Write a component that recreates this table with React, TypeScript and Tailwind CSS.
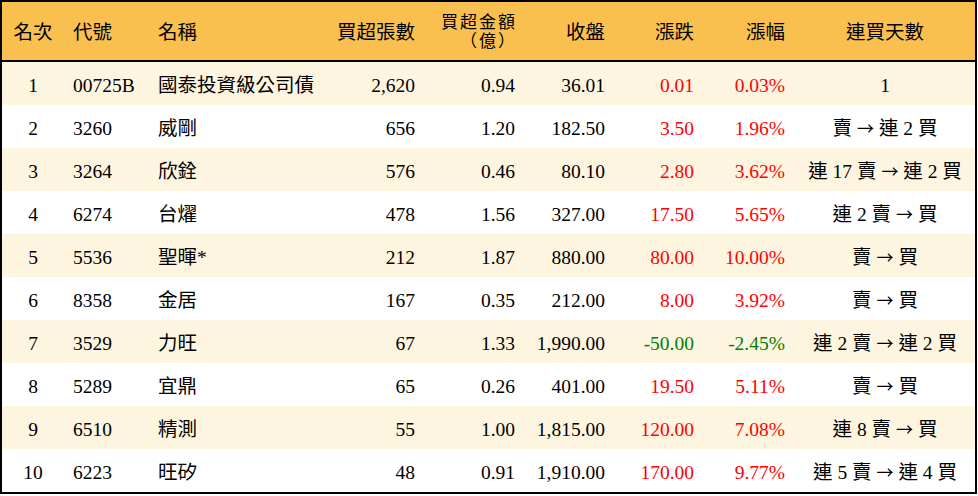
const COLS = "grid grid-cols-[62px_86px_180px_95px_100px_90px_89px_91px_180px]";

type Row = {
  rank: number;
  code: string;
  name: string;
  lots: string;
  amount: string;
  close: string;
  change: string;
  pct: string;
  streak: string;
};

const ROWS: Row[] = [
  { rank: 1, code: "00725B", name: "國泰投資級公司債", lots: "2,620", amount: "0.94", close: "36.01", change: "0.01", pct: "0.03%", streak: "1" },
  { rank: 2, code: "3260", name: "威剛", lots: "656", amount: "1.20", close: "182.50", change: "3.50", pct: "1.96%", streak: "賣 → 連 2 買" },
  { rank: 3, code: "3264", name: "欣銓", lots: "576", amount: "0.46", close: "80.10", change: "2.80", pct: "3.62%", streak: "連 17 賣 → 連 2 買" },
  { rank: 4, code: "6274", name: "台燿", lots: "478", amount: "1.56", close: "327.00", change: "17.50", pct: "5.65%", streak: "連 2 賣 → 買" },
  { rank: 5, code: "5536", name: "聖暉*", lots: "212", amount: "1.87", close: "880.00", change: "80.00", pct: "10.00%", streak: "賣 → 買" },
  { rank: 6, code: "8358", name: "金居", lots: "167", amount: "0.35", close: "212.00", change: "8.00", pct: "3.92%", streak: "賣 → 買" },
  { rank: 7, code: "3529", name: "力旺", lots: "67", amount: "1.33", close: "1,990.00", change: "-50.00", pct: "-2.45%", streak: "連 2 賣 → 連 2 買" },
  { rank: 8, code: "5289", name: "宜鼎", lots: "65", amount: "0.26", close: "401.00", change: "19.50", pct: "5.11%", streak: "賣 → 買" },
  { rank: 9, code: "6510", name: "精測", lots: "55", amount: "1.00", close: "1,815.00", change: "120.00", pct: "7.08%", streak: "連 8 賣 → 買" },
  { rank: 10, code: "6223", name: "旺矽", lots: "48", amount: "0.91", close: "1,910.00", change: "170.00", pct: "9.77%", streak: "連 5 賣 → 連 4 買" },
];

// the arrow is drawn wider in the source, so take it from the CJK font
function Streak({ text }: { text: string }) {
  const parts = text.split("→");
  return (
    <>
      {parts.map((p, i) => (
        <span key={i}>
          {i > 0 && <span className="font-['Noto_Sans_CJK_TC',sans-serif] text-[17px]">→</span>}
          {p}
        </span>
      ))}
    </>
  );
}

export default function App() {
  return (
    <div className="w-[977px] h-[496px] bg-white font-['Liberation_Serif','Noto_Sans_CJK_TC',serif] text-[19.5px] text-black">
      <div className="border-2 border-black">
        {/* header */}
        <div className={`${COLS} h-[60px] items-center bg-[#f9c04f] border-b-2 border-black leading-[24px] pt-[3px]`}>
          <div className="text-center">名次</div>
          <div className="pl-[9px]">代號</div>
          <div className="pl-[8px]">名稱</div>
          <div className="text-right pr-[10px]">買超張數</div>
          <div className="text-right pr-[8px] text-[17px] leading-[19px] tracking-[2px] -mt-[2px]">
            <div>買超金額</div>
            <div>（億）</div>
          </div>
          <div className="text-right pr-[10px]">收盤</div>
          <div className="text-right pr-[10px]">漲跌</div>
          <div className="text-right pr-[10px]">漲幅</div>
          <div className="text-center">連買天數</div>
        </div>

        {ROWS.map((r, i) => {
          const tone = r.change.startsWith("-") ? "text-[#008000]" : "text-[#ff0000]";
          return (
            <div
              key={r.rank}
              className={`${COLS} h-[43px] items-center leading-[24px] pt-[4px] ${i % 2 === 0 ? "bg-[#fef5e0]" : "bg-white"}`}
            >
              <div className="text-center">{r.rank}</div>
              <div className="pl-[9px]">{r.code}</div>
              <div className="pl-[8px]">{r.name}</div>
              <div className="text-right pr-[10px]">{r.lots}</div>
              <div className="text-right pr-[10px]">{r.amount}</div>
              <div className="text-right pr-[10px]">{r.close}</div>
              <div className={`text-right pr-[10px] ${tone}`}>{r.change}</div>
              <div className={`text-right pr-[10px] ${tone}`}>{r.pct}</div>
              <div className="text-center whitespace-nowrap">
                <Streak text={r.streak} />
              </div>
            </div>
          );
        })}
      </div>
    </div>
  );
}
